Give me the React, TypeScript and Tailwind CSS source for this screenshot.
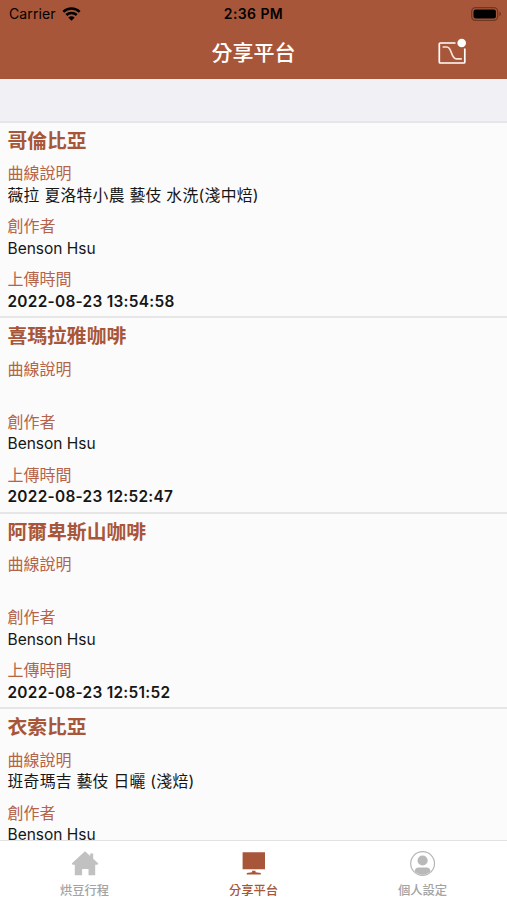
import type { ReactNode } from "react";

type Curve = {
  title: string;
  description: string;
  author: string;
  uploadedAt?: string;
};

const CURVES: Curve[] = [
  {
    title: "哥倫比亞",
    description: "薇拉 夏洛特小農 藝伎 水洗(淺中焙)",
    author: "Benson Hsu",
    uploadedAt: "2022-08-23 13:54:58",
  },
  {
    title: "喜瑪拉雅咖啡",
    description: "",
    author: "Benson Hsu",
    uploadedAt: "2022-08-23 12:52:47",
  },
  {
    title: "阿爾卑斯山咖啡",
    description: "",
    author: "Benson Hsu",
    uploadedAt: "2022-08-23 12:51:52",
  },
  {
    title: "衣索比亞",
    description: "班奇瑪吉 藝伎 日曬 (淺焙)",
    author: "Benson Hsu",
  },
];

export default function App() {
  return (
    <div
      className="flex h-[900px] w-[507px] flex-col overflow-hidden bg-[#fbfbfb] font-['Inter','Noto_Sans_CJK_TC',sans-serif]"
      lang="zh-Hant"
    >
      <header className="h-[79px] shrink-0 bg-[#a85639]">
        <StatusBar />
        <NavBar />
      </header>
      <main className="min-h-0 flex-1 overflow-hidden">
        <div className="h-[43.5px] border-b-2 border-[#e6e6e8] bg-[#f0f0f5]" />
        {CURVES.map((curve) => (
          <CurveRow curve={curve} key={curve.title} />
        ))}
      </main>
      <TabBar />
    </div>
  );
}

function StatusBar() {
  return (
    <div className="grid h-7 grid-cols-3 items-center text-black">
      <div className="flex items-center gap-[6px] pl-[9px] pb-px">
        <span className="text-[14px] leading-none tracking-[0.1px]">
          Carrier
        </span>
        <WifiIcon />
      </div>
      <span className="text-center text-[14px] leading-none font-semibold tracking-[0.4px]">
        2:36 PM
      </span>
      <div className="flex justify-end pr-[5px] pb-px">
        <BatteryIcon />
      </div>
    </div>
  );
}

function NavBar() {
  return (
    <div className="grid h-12 grid-cols-3 items-center">
      <h1 className="col-start-2 text-center text-[21px] leading-none font-medium text-white">
        分享平台
      </h1>
      <button
        type="button"
        aria-label="曲線"
        className="mr-10 justify-self-end pb-px"
      >
        <CurveIcon />
      </button>
    </div>
  );
}

function CurveRow({ curve }: { curve: Curve }) {
  return (
    <article className="h-[195.5px] border-b-2 border-[#e6e6e6] px-[7.5px]">
      <h2 className="h-[39.5px] pt-1 text-[19.8px] leading-7 font-bold text-[#a85639]">
        {curve.title}
      </h2>
      <div className="flex flex-col gap-[9px]">
        <Field label="曲線說明">
          <span className="text-[15.8px] tracking-[0.28px]">
            {curve.description}
          </span>
        </Field>
        <Field label="創作者">
          <span className="text-[15.5px]">{curve.author}</span>
        </Field>
        {curve.uploadedAt && (
          <Field label="上傳時間">
            <span className="text-[15.4px] font-semibold tracking-[0.28px]">
              {curve.uploadedAt}
            </span>
          </Field>
        )}
      </div>
    </article>
  );
}

function Field({ label, children }: { label: string; children: ReactNode }) {
  return (
    <div className="text-[16px] leading-[22px]">
      <p className="text-[#b5644a]">{label}</p>
      <p className="-mt-[0.5px] h-[22.5px] text-[#161616]">{children}</p>
    </div>
  );
}

function TabBar() {
  return (
    <nav className="grid h-[60px] shrink-0 grid-cols-3 border-t border-[#e2e2e2] bg-white text-[12.3px] leading-4 font-medium">
      <div className="flex flex-col items-center pt-[9px] text-[#a3a3a3]">
        <HomeIcon />
        <span className="mt-[5px]">烘豆行程</span>
      </div>
      <div className="flex flex-col items-center pt-[9px] text-[#a85639]">
        <MonitorIcon />
        <span className="mt-[5px]">分享平台</span>
      </div>
      <div className="flex flex-col items-center pt-[9px] text-[#a3a3a3]">
        <ProfileIcon />
        <span className="mt-[5px]">個人設定</span>
      </div>
    </nav>
  );
}

function WifiIcon() {
  return (
    <svg width="19" height="14" viewBox="0 0 19 14" fill="none">
      <path
        d="M1.3 4.9a11.8 11.8 0 0 1 16.4 0M4.3 8a7.5 7.5 0 0 1 10.4 0"
        stroke="#000"
        strokeWidth="2.5"
      />
      <path d="M9.5 13.8 6.3 10.5a4.6 4.6 0 0 1 6.4 0z" fill="#000" />
    </svg>
  );
}

function BatteryIcon() {
  return (
    <svg width="31" height="14" viewBox="0 0 31 14" fill="none">
      <rect
        x="0.7"
        y="0.7"
        width="26"
        height="12.6"
        rx="3.8"
        stroke="#6f3823"
        strokeWidth="1.3"
      />
      <rect x="2.5" y="2.5" width="22.4" height="9" rx="2" fill="#000" />
      <path d="M28.3 4.8c2.2.7 2.2 3.7 0 4.4z" fill="#6f3823" />
    </svg>
  );
}

function CurveIcon() {
  return (
    <svg width="29" height="27" viewBox="0 0 29 27" fill="none">
      <path
        d="M17.5 5H2.3a1 1 0 0 0-1 1v18a1 1 0 0 0 1 1h23.5a1 1 0 0 0 1-1V10.5"
        stroke="#fff"
        strokeWidth="1.7"
      />
      <path
        d="M4.6 9h4.2c5.4 0 3.8 11.800 9.600 11.800h5.400"
        stroke="#fbe3da"
        strokeWidth="1.7"
      />
      <circle cx="23.7" cy="5" r="4.3" fill="#fff" />
    </svg>
  );
}

function HomeIcon() {
  return (
    <svg width="28" height="28" viewBox="0 0 28 28" fill="#c1c1c1">
      <path d="m14 1.300 5.200 4.700V3.400h3v5.300l5.100 4.800-.9 1.200h-2.200v10.600h-6.700v-6.200h-6.400v6.200H3.800V14.700H1.600l-.9-1.200z" />
    </svg>
  );
}

function MonitorIcon() {
  return (
    <svg width="28" height="28" viewBox="0 0 28 28" fill="#a85639">
      <path d="M2.6 2.3H25v17H2.600zM12.100 20.800h3.400v1.400l5.300.8v1.400H6.800V23l5.300-.8z" />
    </svg>
  );
}

function ProfileIcon() {
  return (
    <svg width="28" height="28" viewBox="0 0 28 28" fill="none">
      <circle cx="13.6" cy="13.5" r="11.9" stroke="#b5b5b5" strokeWidth="1.2" />
      <circle cx="13.6" cy="10.500" r="5.1" fill="#b9b9b9" />
      <path
        d="M5.6 21.300c.6-2.800 2-3.800 4-3.800h8c2 0 3.400 1 4 3.800a11.200 11.200 0 0 1-16 0z"
        fill="#b9b9b9"
      />
    </svg>
  );
}
